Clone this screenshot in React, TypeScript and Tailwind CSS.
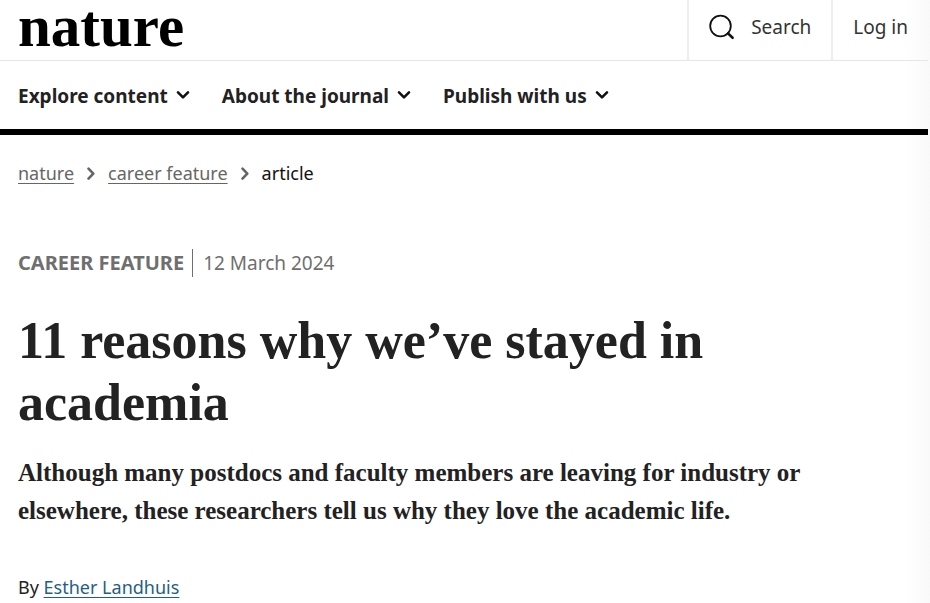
const menus = ["Explore content", "About the journal", "Publish with us"];

const SearchIcon = () => (
  <svg viewBox="0 0 26 26" className="h-[26px] w-[26px]" fill="none" stroke="#111111" strokeLinecap="round">
    <circle cx="11.5" cy="12" r="10.3" strokeWidth="1.8" />
    <path d="M19 19.4 23.6 23.8" strokeWidth="2.6" />
  </svg>
);

const ChevronDown = () => (
  <svg viewBox="0 0 14 10" className="mb-[3px] h-[10px] w-[14px]" fill="none" stroke="#111111" strokeWidth="2.6" strokeLinecap="round" strokeLinejoin="round">
    <path d="M2 2.3 7 7.3 12 2.3" />
  </svg>
);

const ChevronRight = () => (
  <svg viewBox="0 0 10 14" className="h-[14px] w-[10px]" fill="none" stroke="#666666" strokeWidth="2.6" strokeLinecap="round" strokeLinejoin="round">
    <path d="M2.5 2.6 7.3 7.6 2.5 12.6" />
  </svg>
);

const Header = () => (
  <header className="mr-[2px] border-b-6 border-black">
    <div className="flex items-stretch justify-between border-b border-[#e6e6e6]">
      <a href="#" className="pb-2 pl-[18px] font-['Liberation_Serif',serif] text-[59px] leading-[52px] font-bold text-black">
        nature
      </a>
      <div className="flex text-[#333333]">
        <button type="button" className="flex items-center gap-4 border-l-2 border-[#eeeeee] px-5 pb-[6px]">
          <SearchIcon />
          Search
        </button>
        <a href="#" className="flex items-center border-l-2 border-[#eeeeee] px-5 pb-[6px]">
          Log in
        </a>
      </div>
    </div>
    <nav className="flex items-center gap-8 px-[18px] pt-[21px] pb-[19px]">
      {menus.map((menu) => (
        <button key={menu} type="button" className="flex items-center gap-2 font-bold text-[#222222]">
          {menu}
          <ChevronDown />
        </button>
      ))}
    </nav>
  </header>
);

const App = () => (
  <div className="min-h-screen bg-[linear-gradient(to_left,#f9f9f9,#ffffff_24px)] font-['Noto_Sans',sans-serif] text-[19px] leading-7">
    <Header />
    <main className="px-[18px] pt-6">
      <nav className="flex items-center gap-3 text-lg leading-7 text-[#666666]">
        <a href="#" className="underline decoration-1 underline-offset-3">nature</a>
        <ChevronRight />
        <a href="#" className="underline decoration-1 underline-offset-3">career feature</a>
        <ChevronRight />
        <span className="text-[#111111]">article</span>
      </nav>
      <div className="mt-[62px] flex text-[#6f6f6f]">
        <span className="border-r border-[#6f6f6f] pr-2 text-xl leading-7 font-bold">CAREER FEATURE</span>
        <time className="pl-[10px]">12 March 2024</time>
      </div>
      <h1 className="mt-[33px] max-w-[760px] font-['Liberation_Serif',serif] text-[52px] leading-[62px] font-bold text-[#222222]">
        11 reasons why we’ve stayed in academia
      </h1>
      <p className="mt-5 max-w-[800px] font-['Liberation_Serif',serif] text-[25px] leading-[38px] font-bold text-[#222222]">
        Although many postdocs and faculty members are leaving for industry or elsewhere, these researchers tell us why they love the academic life.
      </p>
      <p className="mt-[43px] text-lg leading-7 text-[#222222]">
        By{" "}
        <a href="#" className="text-[#1f5f86] underline decoration-1 underline-offset-3">
          Esther Landhuis
        </a>
      </p>
    </main>
  </div>
);

export default App;
